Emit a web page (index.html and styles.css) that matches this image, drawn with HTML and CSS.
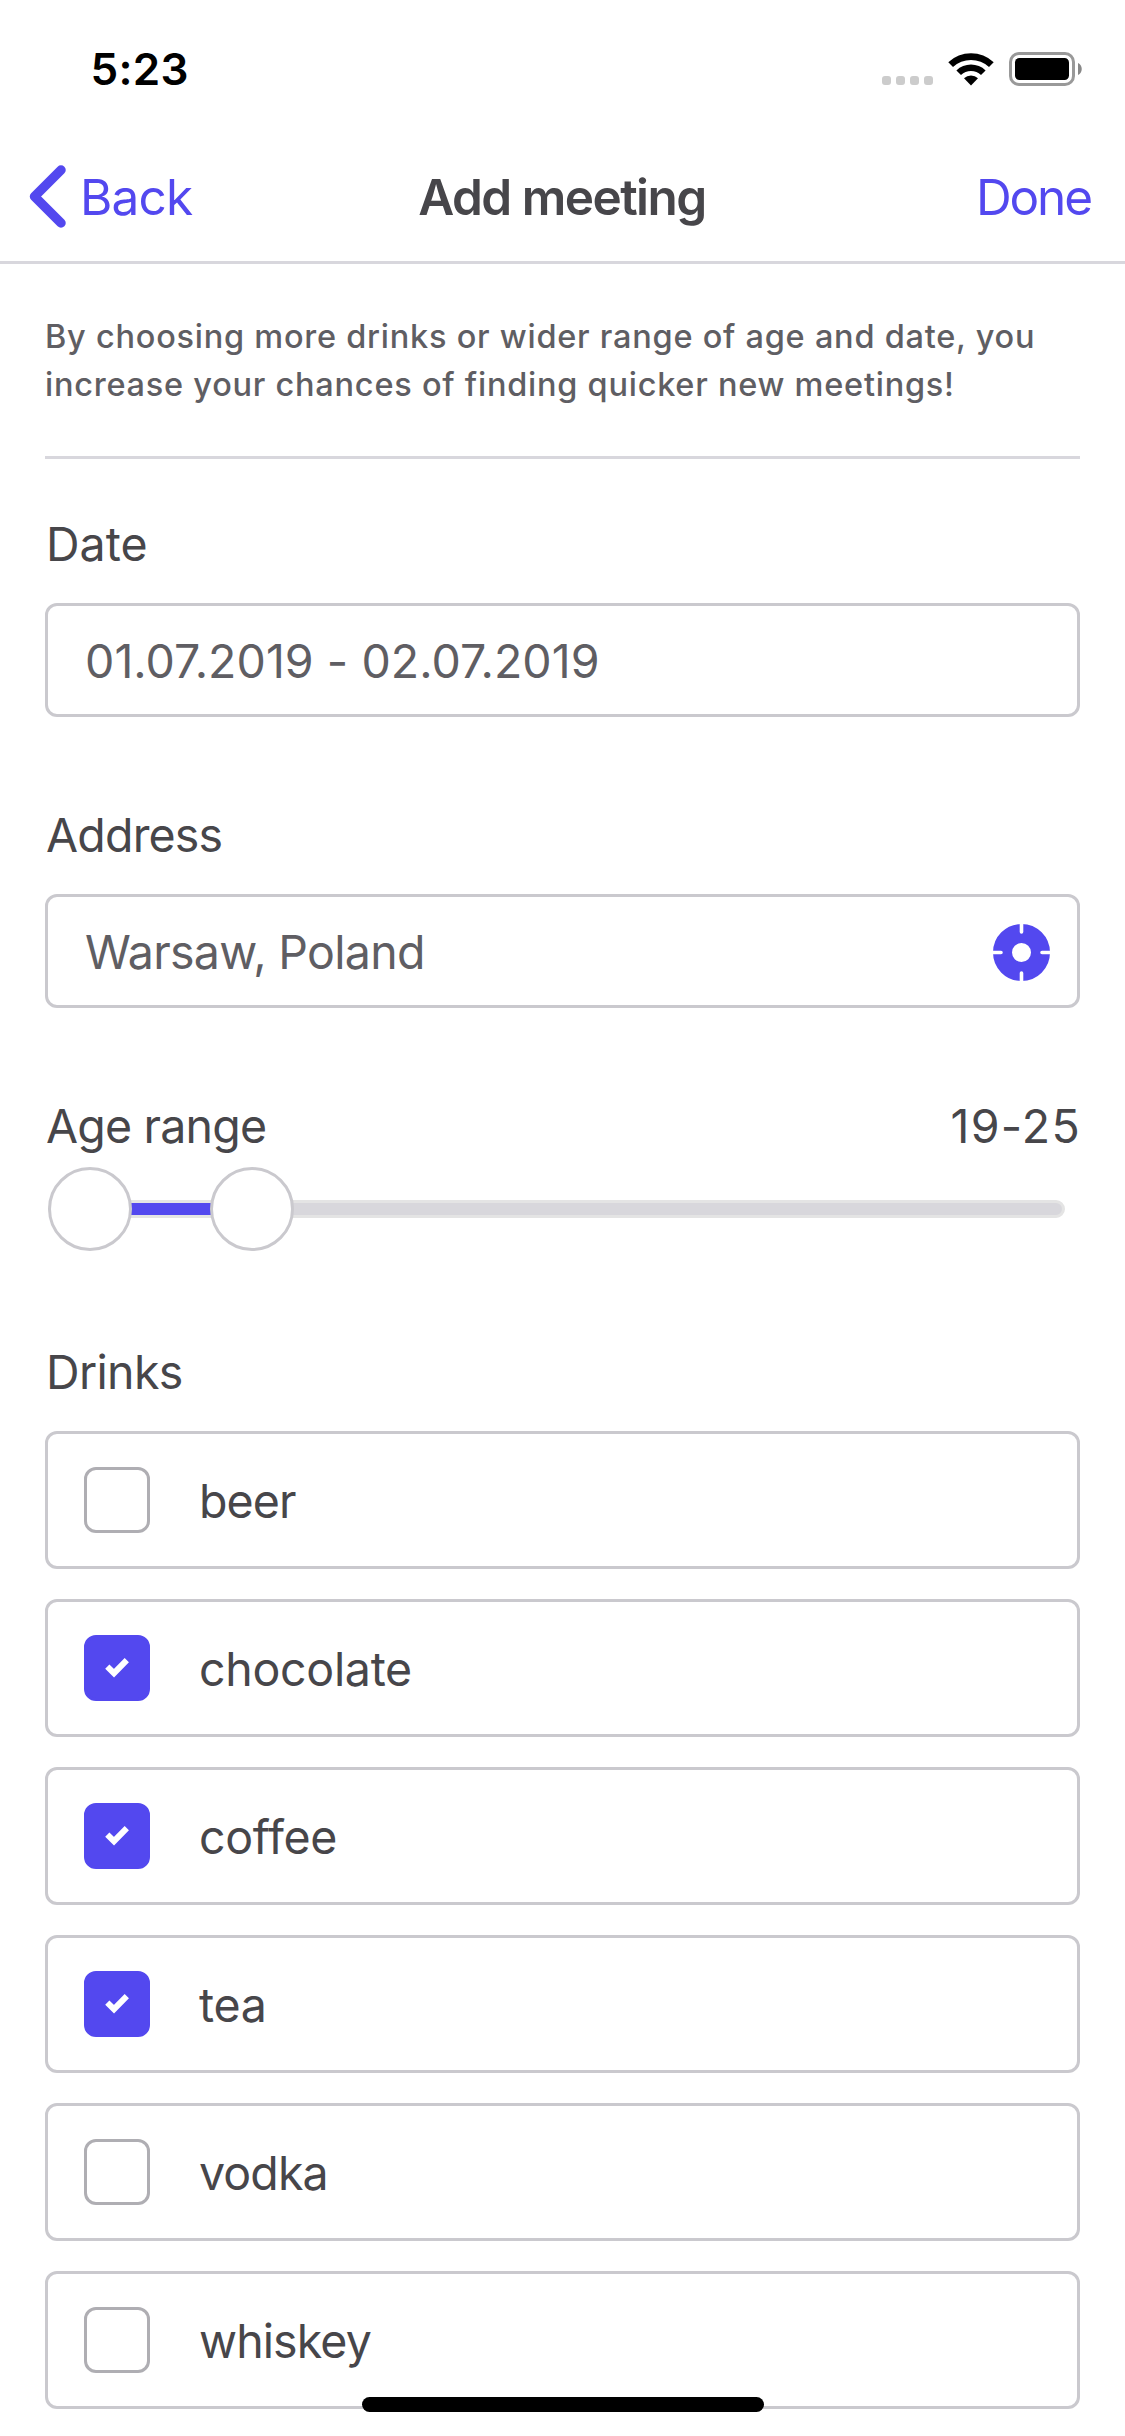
FILE: index.html
```html
<!DOCTYPE html>
<html lang="en">
<head>
<meta charset="utf-8">
<title>Add meeting</title>
<link rel="stylesheet" href="styles.css">
</head>
<body>
<svg class="sprite" aria-hidden="true">
  <symbol id="check" viewBox="0 0 24 20"><path d="M2.3 8.6 9 15.2 21.8 2.2" fill="none" stroke="#fff" stroke-width="6"/></symbol>
</svg>

<header class="status-bar">
  <span class="time">5:23</span>
  <div class="indicators">
    <div class="signal"><i></i><i></i><i></i><i></i></div>
    <svg class="wifi" width="46" height="34" viewBox="0 0 46 34">
      <path d="M.3 10.3A33 33 0 0 1 45.7 10.3L41 15A26.400 26.400 0 0 0 5 15Z"/>
      <path d="M8.400 18.400A21 21 0 0 1 37.600 18.400L33 23.100A14.500 14.500 0 0 0 13 23.100Z"/>
      <path d="M16 26.300A10.200 10.200 0 0 1 30 26.300L23 33.400Z"/>
    </svg>
    <svg class="battery" width="74" height="34" viewBox="0 0 74 34">
      <rect x="1.500" y="1.500" width="63" height="31" rx="8.500" fill="none" stroke="#999" stroke-width="3"/>
      <rect x="6" y="6" width="54" height="22" rx="4.500"/>
      <path d="M69 11C74 13 74 21 69 23Z" fill="#888"/>
    </svg>
  </div>
</header>

<nav class="nav-bar">
  <a class="back">
    <svg width="37" height="63" viewBox="0 0 37 63"><path d="M32 5 5.500 31.500 32 58" fill="none" stroke="#5348ef" stroke-width="9.500" stroke-linecap="round" stroke-linejoin="round"/></svg>
    <span>Back</span>
  </a>
  <h1 class="title">Add meeting</h1>
  <a class="done">Done</a>
</nav>

<main class="form">
  <p class="intro"><span class="intro-line">By choosing more drinks or wider range of age and date, you</span> <span class="intro-line">increase your chances of finding quicker new meetings!</span></p>

  <section class="group">
    <h2 class="label label-date">Date</h2>
    <div class="field"><span class="value value-date">01.07.2019 - 02.07.2019</span></div>
  </section>

  <section class="group">
    <h2 class="label">Address</h2>
    <div class="field">
      <span class="value">Warsaw, Poland</span>
      <svg class="locate" width="57" height="57" viewBox="0 0 57 57">
        <circle cx="28.500" cy="28.500" r="19" fill="none" stroke="#5348ef" stroke-width="19"/>
        <path d="M28.500 -3V8M28.500 60V49M-3 28.500H8M60 28.500H49" stroke="#fff" stroke-width="3.600" stroke-linecap="round"/>
      </svg>
    </div>
  </section>

  <section class="group group-range">
    <div class="range-head">
      <h2 class="label">Age range</h2>
      <span class="range-value">19-25</span>
    </div>
    <div class="slider">
      <div class="track"><div class="selected"></div></div>
      <span class="thumb thumb-min"></span>
      <span class="thumb thumb-max"></span>
    </div>
  </section>

  <section class="group group-drinks">
    <h2 class="label label-drinks">Drinks</h2>
    <ul class="options">
      <li class="option"><span class="box"></span><span class="name tight">beer</span></li>
      <li class="option"><span class="box checked"><svg width="24" height="20"><use href="#check"/></svg></span><span class="name">chocolate</span></li>
      <li class="option"><span class="box checked"><svg width="24" height="20"><use href="#check"/></svg></span><span class="name">coffee</span></li>
      <li class="option"><span class="box checked"><svg width="24" height="20"><use href="#check"/></svg></span><span class="name">tea</span></li>
      <li class="option"><span class="box"></span><span class="name tight">vodka</span></li>
      <li class="option"><span class="box"></span><span class="name tight">whiskey</span></li>
    </ul>
  </section>
</main>
<div class="home-indicator"></div>
</body>
</html>
```
FILE: styles.css
```css
* {
  box-sizing: border-box;
  margin: 0;
  padding: 0;
}

body {
  position: relative;
  height: 2436px;
  overflow: hidden;
  background: #fff;
  color: #47464a;
  font-family: Inter, "Liberation Sans", sans-serif;
  font-size: 46.5px;
  line-height: 56px;
}

svg {
  display: block;
  flex: none;
}

.sprite {
  position: absolute;
  width: 0;
  height: 0;
}

/* Status bar */
.status-bar {
  display: flex;
  justify-content: space-between;
  align-items: center;
  height: 138px;
  padding: 0 42px 0 90.5px;
  color: #000;
}

.time {
  font-size: 44px;
  font-weight: 600;
  letter-spacing: 0.3px;
}

.indicators {
  display: flex;
}

.signal {
  display: flex;
  align-items: flex-end;
  gap: 5px;
  padding-bottom: 1px;
  margin-right: 15px;
}

.signal i {
  width: 9px;
  height: 9px;
  border-radius: 3px;
  background: #ccc;
}

.wifi {
  margin-right: 15px;
}

/* Navigation */
.nav-bar {
  display: grid;
  grid-template-columns: 1fr auto 1fr;
  align-items: center;
  height: 126px;
  padding: 0 34px 6px 29px;
  border-bottom: 3px solid #d8d7dd;
  font-size: 49.5px;
}

.back {
  display: flex;
  align-items: center;
  gap: 14px;
  color: #5348ef;
  letter-spacing: -0.82px;
}

.title {
  font-size: inherit;
  font-weight: 600;
  letter-spacing: -1.53px;
  margin-left: 4px;
}

.done {
  justify-self: end;
  color: #5348ef;
  letter-spacing: -2.1px;
}

/* Form */
.form {
  padding: 0 45px;
}

.intro {
  padding: 49px 0 47px;
  border-bottom: 3px solid #d8d7dd;
  color: #5f5e63;
  font-size: 32.5px;
  font-weight: 500;
  line-height: 48px;
  letter-spacing: 0.75px;
}

.intro-line {
  display: block;
}

.group {
  display: flex;
  flex-direction: column;
  gap: 31px;
  margin-top: 90px;
}

.intro + .group {
  margin-top: 57px;
}

.group-range {
  gap: 13px;
}

.group-drinks {
  margin-top: 93px;
}

.label {
  padding-left: 1px;
  font-size: inherit;
  font-weight: 400;
  letter-spacing: -0.8px;
}

.label-date {
  letter-spacing: 0;
}

.label-drinks {
  letter-spacing: -0.65px;
}

.field {
  display: flex;
  justify-content: space-between;
  align-items: center;
  height: 114px;
  padding: 0 27px 0 37px;
  border: 3px solid #cac9ce;
  border-radius: 12px;
}

.value {
  padding-top: 2px;
  color: #5f5e63;
  letter-spacing: -0.7px;
}

.value-date {
  letter-spacing: 0.05px;
}

.locate {
  margin-top: 2px;
}

/* Age slider */
.range-head {
  display: flex;
  justify-content: space-between;
}

.range-value {
  letter-spacing: 1.27px;
  margin-right: -1px;
}

.slider {
  position: relative;
  height: 84px;
  padding: 33px 15px 33px 3px;
}

.track {
  height: 18px;
  border: 3px solid #e4e4e4;
  border-radius: 9px;
  background: #d8d7dc;
}

.selected {
  width: 198px;
  height: 12px;
  background: #5348ef;
}

.thumb {
  position: absolute;
  top: 0;
  width: 84px;
  height: 84px;
  border: 3px solid #cac9ce;
  border-radius: 50%;
  background: #fff;
}

.thumb-min {
  left: 3px;
}

.thumb-max {
  left: 165px;
}

/* Drinks */
.options {
  display: grid;
  gap: 30px;
  list-style: none;
}

.option {
  display: flex;
  align-items: center;
  gap: 49px;
  height: 138px;
  padding: 0 36px;
  border: 3px solid #cac9ce;
  border-radius: 12px;
}

.box {
  display: flex;
  justify-content: center;
  align-items: center;
  width: 66px;
  height: 66px;
  border: 3px solid #afaeb3;
  border-radius: 12px;
}

.checked {
  border-color: #5348ef;
  background: #5348ef;
}

.name {
  padding-top: 2px;
  letter-spacing: -0.3px;
}

.tight {
  letter-spacing: -0.9px;
}

.home-indicator {
  position: absolute;
  left: 362px;
  top: 2397px;
  width: 402px;
  height: 15px;
  border-radius: 8px;
  background: #000;
}
```
